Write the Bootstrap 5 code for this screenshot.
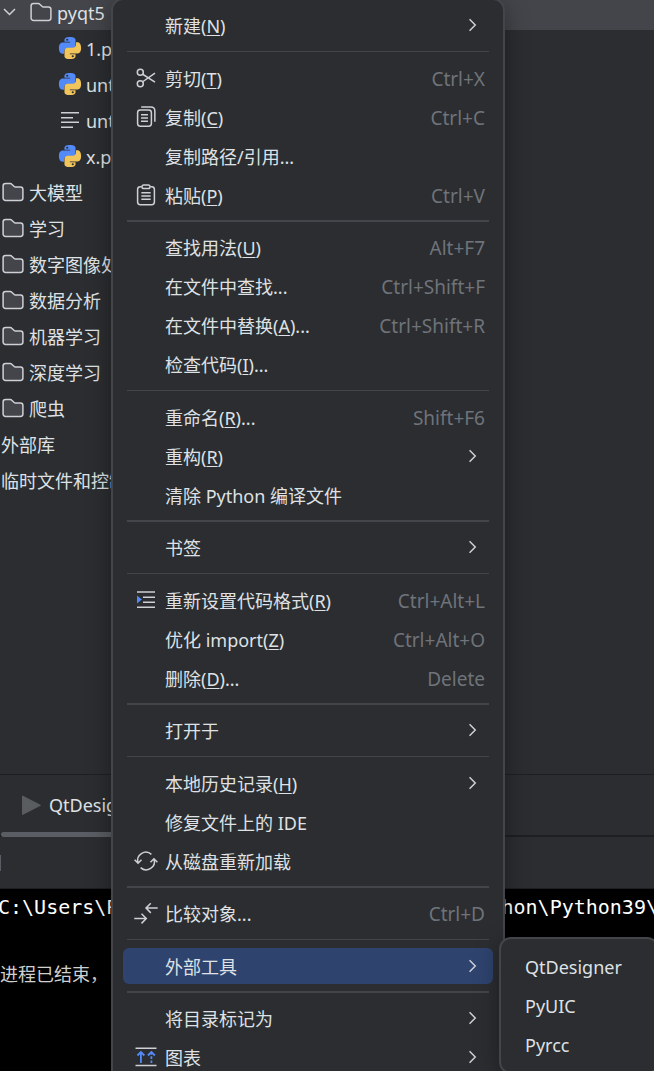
<!DOCTYPE html>
<html lang="zh-CN">
<head>
<meta charset="utf-8">
<meta name="viewport" content="width=device-width, initial-scale=1">
<title>pyqt5</title>
<link href="https://cdn.jsdelivr.net/npm/bootstrap@5.3.0/dist/css/bootstrap.min.css" rel="stylesheet">
<style>
:root { --panel: #2b2d30; --line: #43454a; --ink: #dfe1e5; --dim: #6f737a; --icon: #ced0d6; }
body { background: var(--panel); color: var(--ink); font: 18px/24px "Noto Sans", "Noto Sans CJK SC", sans-serif; }
.icon { width: 24px; height: 24px; flex: none; fill: none; stroke: var(--icon); }
.tree-row { height: 36px; gap: 4px; padding-left: 1px; }
.tree-row > span, .entry > span { padding-top: 2px; }
.tree-row.selected { height: 30px; gap: 4px; padding-left: 0; padding-bottom: 6px; background: var(--line); }
.tree-row.nested { padding-left: 58px; }
.tree-row.selected .toggle { width: 25px; }
.tool-tabs { height: 63px; border-top: 1px solid #1e1f22; border-bottom: 2px solid #1e1f22; }
.tool-tab { padding: 0 16px; gap: 8px; color: var(--ink); margin-left: 1px; }
.tool-tab::after { content: ""; position: absolute; left: 0; right: 0; bottom: -2px; height: 5px; border-radius: 3px; background: #5a5d63; }
.tool-actions { height: 52px; border-bottom: 1px solid #1e1f22; }
.stub { width: 1px; height: 16px; background: #5a5d63; }
.console { height: 182px; background: #000; color: #fff; line-height: 36px; }
.console-path { font-family: "DejaVu Sans Mono", monospace; font-size: 20px; margin: 0 -4px 0 -2px; }
.console-end { font-family: "Noto Sans CJK SC", sans-serif; color: #d0d0d0; margin-top: 30px; }
.popup { background: var(--panel); border: 2px solid var(--line); box-shadow: 0 6px 24px rgba(0, 0, 0, .35); }
.context { left: 111px; top: -2px; width: 394px; padding: 7px 10px; border-radius: 12px; }
.entry { height: 36px; margin-bottom: 3px; padding: 0 8px 0 11px; gap: 7px; border-radius: 6px; color: var(--ink); }
.entry.active { background: #2e436e; }
.keys { color: var(--dim); font-size: 19px; }
.rule { margin: 5px 4px 8px; height: 1px; background: var(--line); }
.rule.thick { margin: 4px 4px 7px; height: 2px; }
.submenu { left: calc(100% + 6px); top: -11px; width: 160px; padding: 9px 10px 7px; border-radius: 12px; }
.submenu .entry { padding-left: 14px; }
u { text-underline-offset: 2px; }
</style>
</head>
<body class="vh-100 overflow-hidden position-relative d-flex flex-column">
<svg class="d-none" viewBox="0 0 16 16">
  <symbol id="folder" viewBox="0 0 16 16"><path fill="#43454a" d="M1.4 12V4c0-1 .7-1.6 1.6-1.6h3.200c.4 0 .7.100 1 .4l1.600 1.500c.200.2.5.3.8.3H13c.9 0 1.600.7 1.600 1.600V12c0 .9-.7 1.600-1.600 1.600H3c-.9 0-1.600-.7-1.600-1.600z"/></symbol>
  <symbol id="next" viewBox="0 0 16 16"><path d="M5.700 4.200 9.500 8l-3.800 3.800"/></symbol>
  <symbol id="python" viewBox="-1 -1 26 26">
    <path stroke="none" fill="#548af7" fill-rule="evenodd" d="M12 0c3.500 0 6 .8 6 3.400v5.400c0 2.100-1.400 3.500-3.500 3.500H9.300c-2.300 0-3.800 1.500-3.800 3.700v2.200H4C1.200 18.200 0 15.500 0 12s1.300-6 4.300-6h7.900v-.9H6V3.400C6 .8 8.500 0 12 0zM9 1.900a1.150 1.150 0 1 0 0 2.300 1.150 1.150 0 0 0 0-2.300z"/>
    <path stroke="none" fill="#f2c55c" fill-rule="evenodd" transform="rotate(180 12 12)" d="M12 0c3.500 0 6 .8 6 3.400v5.400c0 2.100-1.400 3.500-3.500 3.500H9.300c-2.300 0-3.800 1.500-3.800 3.700v2.200H4C1.200 18.200 0 15.500 0 12s1.300-6 4.300-6h7.900v-.9H6V3.400C6 .8 8.500 0 12 0zM9 1.900a1.150 1.150 0 1 0 0 2.300 1.150 1.150 0 0 0 0-2.300z"/>
  </symbol>
</svg>

<main class="flex-grow-1 overflow-hidden">
  <ul class="list-unstyled mb-0 text-nowrap">
    <li class="tree-row selected d-flex align-items-center"><svg class="icon toggle" viewBox="0 0 25 24"><path stroke-width="1.500" d="m4 9 5.500 5.500L15 9"/></svg><svg class="icon"><use href="#folder"/></svg><span>pyqt5</span></li>
    <li class="tree-row nested d-flex align-items-center"><svg class="icon"><use href="#python"/></svg><span>1.py</span></li>
    <li class="tree-row nested d-flex align-items-center"><svg class="icon"><use href="#python"/></svg><span>untitled</span></li>
    <li class="tree-row nested d-flex align-items-center"><svg class="icon" viewBox="0 0 24 24"><path stroke-width="1.500" d="M3 4.800h18M3 9.800h12M3 14.300h18M3 19.200h12"/></svg><span>untitled</span></li>
    <li class="tree-row nested d-flex align-items-center"><svg class="icon"><use href="#python"/></svg><span>x.py</span></li>
    <li class="tree-row d-flex align-items-center"><svg class="icon"><use href="#folder"/></svg><span>大模型</span></li>
    <li class="tree-row d-flex align-items-center"><svg class="icon"><use href="#folder"/></svg><span>学习</span></li>
    <li class="tree-row d-flex align-items-center"><svg class="icon"><use href="#folder"/></svg><span>数字图像处理</span></li>
    <li class="tree-row d-flex align-items-center"><svg class="icon"><use href="#folder"/></svg><span>数据分析</span></li>
    <li class="tree-row d-flex align-items-center"><svg class="icon"><use href="#folder"/></svg><span>机器学习</span></li>
    <li class="tree-row d-flex align-items-center"><svg class="icon"><use href="#folder"/></svg><span>深度学习</span></li>
    <li class="tree-row d-flex align-items-center"><svg class="icon"><use href="#folder"/></svg><span>爬虫</span></li>
    <li class="tree-row d-flex align-items-center"><span>外部库</span></li>
    <li class="tree-row d-flex align-items-center"><span>临时文件和控制台</span></li>
  </ul>
</main>

<section>
  <div class="tool-tabs d-flex">
    <button type="button" class="tool-tab position-relative d-flex align-items-center border-0 bg-transparent"><svg class="icon" viewBox="0 0 24 24"><path fill="#5a5d5f" stroke="#5a5d5f" stroke-linejoin="round" d="M5.500 3v18.500l18-9.200z"/></svg><span>QtDesigner</span></button>
  </div>
  <div class="tool-actions d-flex align-items-center"><span class="stub"></span></div>
  <div class="console overflow-hidden text-nowrap">
    <div class="console-path d-flex justify-content-between"><span>C:\Users\P</span><span>thon\Python39\</span></div>
    <div class="console-end">进程已结束，</div>
  </div>
</section>

<ul class="popup context list-unstyled position-absolute d-flex flex-column mb-0 text-nowrap">
  <li><button type="button" class="entry w-100 border-0 bg-transparent d-flex align-items-center"><span class="icon"></span><span>新建(<u>N</u>)</span><svg class="icon ms-auto"><use href="#next"/></svg></button></li>
  <li class="rule"></li>
  <li><button type="button" class="entry w-100 border-0 bg-transparent d-flex align-items-center"><svg class="icon" viewBox="0 0 16 16"><circle cx="4.200" cy="4.200" r="2"/><circle cx="4.200" cy="11.800" r="2"/><path d="M5.800 5.500 14 10.800M5.800 10.500 14 4.800"/></svg><span>剪切(<u>T</u>)</span><span class="keys ms-auto">Ctrl+X</span></button></li>
  <li><button type="button" class="entry w-100 border-0 bg-transparent d-flex align-items-center"><svg class="icon" viewBox="0 0 16 16"><rect x="2.400" y="3.400" width="9.200" height="10.800" rx="1.800"/><path d="M4.800 1.300h6.400c1.600 0 2.700 1.100 2.700 2.700v7.200M4.700 6.500h4.600M4.700 8.700h4.600M4.700 10.900h4.600"/></svg><span>复制(<u>C</u>)</span><span class="keys ms-auto">Ctrl+C</span></button></li>
  <li><button type="button" class="entry w-100 border-0 bg-transparent d-flex align-items-center"><span class="icon"></span><span>复制路径/引用...</span></button></li>
  <li><button type="button" class="entry w-100 border-0 bg-transparent d-flex align-items-center"><svg class="icon" viewBox="0 0 16 16"><path d="M5 2.500h-.8c-1 0-1.800.8-1.800 1.800v8.400c0 1 .8 1.800 1.800 1.800h7.600c1 0 1.800-.8 1.800-1.800V4.300c0-1-.8-1.800-1.800-1.800H11M4.900 6.500h6.200M4.900 8.700h6.200M4.900 10.900h6.200"/><rect x="5.300" y="1.300" width="5.400" height="2.400" rx="1.200"/></svg><span>粘贴(<u>P</u>)</span><span class="keys ms-auto">Ctrl+V</span></button></li>
  <li class="rule thick"></li>
  <li><button type="button" class="entry w-100 border-0 bg-transparent d-flex align-items-center"><span class="icon"></span><span>查找用法(<u>U</u>)</span><span class="keys ms-auto">Alt+F7</span></button></li>
  <li><button type="button" class="entry w-100 border-0 bg-transparent d-flex align-items-center"><span class="icon"></span><span>在文件中查找...</span><span class="keys ms-auto">Ctrl+Shift+F</span></button></li>
  <li><button type="button" class="entry w-100 border-0 bg-transparent d-flex align-items-center"><span class="icon"></span><span>在文件中替换(<u>A</u>)...</span><span class="keys ms-auto">Ctrl+Shift+R</span></button></li>
  <li><button type="button" class="entry w-100 border-0 bg-transparent d-flex align-items-center"><span class="icon"></span><span>检查代码(<u>I</u>)...</span></button></li>
  <li class="rule"></li>
  <li><button type="button" class="entry w-100 border-0 bg-transparent d-flex align-items-center"><span class="icon"></span><span>重命名(<u>R</u>)...</span><span class="keys ms-auto">Shift+F6</span></button></li>
  <li><button type="button" class="entry w-100 border-0 bg-transparent d-flex align-items-center"><span class="icon"></span><span>重构(<u>R</u>)</span><svg class="icon ms-auto"><use href="#next"/></svg></button></li>
  <li><button type="button" class="entry w-100 border-0 bg-transparent d-flex align-items-center"><span class="icon"></span><span>清除 Python 编译文件</span></button></li>
  <li class="rule thick"></li>
  <li><button type="button" class="entry w-100 border-0 bg-transparent d-flex align-items-center"><span class="icon"></span><span>书签</span><svg class="icon ms-auto"><use href="#next"/></svg></button></li>
  <li class="rule"></li>
  <li><button type="button" class="entry w-100 border-0 bg-transparent d-flex align-items-center"><svg class="icon" viewBox="0 0 16 16"><path d="M2 2.700h12M6 6.200h8M6 9.500h8M2 12.800h12"/><path fill="#548af7" stroke="none" d="M2 5v5.400l3.200-2.700z"/></svg><span>重新设置代码格式(<u>R</u>)</span><span class="keys ms-auto">Ctrl+Alt+L</span></button></li>
  <li><button type="button" class="entry w-100 border-0 bg-transparent d-flex align-items-center"><span class="icon"></span><span>优化 import(<u>Z</u>)</span><span class="keys ms-auto">Ctrl+Alt+O</span></button></li>
  <li><button type="button" class="entry w-100 border-0 bg-transparent d-flex align-items-center"><span class="icon"></span><span>删除(<u>D</u>)...</span><span class="keys ms-auto">Delete</span></button></li>
  <li class="rule thick"></li>
  <li><button type="button" class="entry w-100 border-0 bg-transparent d-flex align-items-center"><span class="icon"></span><span>打开于</span><svg class="icon ms-auto"><use href="#next"/></svg></button></li>
  <li class="rule"></li>
  <li><button type="button" class="entry w-100 border-0 bg-transparent d-flex align-items-center"><span class="icon"></span><span>本地历史记录(<u>H</u>)</span><svg class="icon ms-auto"><use href="#next"/></svg></button></li>
  <li><button type="button" class="entry w-100 border-0 bg-transparent d-flex align-items-center"><span class="icon"></span><span>修复文件上的 IDE</span></button></li>
  <li><button type="button" class="entry w-100 border-0 bg-transparent d-flex align-items-center"><svg class="icon" viewBox="0 0 16 16"><path d="M2.700 9.400A5.500 5.500 0 0 1 11.600 3.600M13.300 6.600A5.500 5.500 0 0 1 4.400 12.400M.4 7.200l2.300 2.300L5 7.200M11 8.800l2.300-2.300 2.300 2.300"/></svg><span>从磁盘重新加载</span></button></li>
  <li class="rule thick"></li>
  <li><button type="button" class="entry w-100 border-0 bg-transparent d-flex align-items-center"><svg class="icon" viewBox="0 0 16 16"><path d="M15.800 4.700H8M11.200 1.500 8 4.700l3.200 3.200M.2 11.700H8M5 8.500l3.200 3.200L5 14.900"/></svg><span>比较对象...</span><span class="keys ms-auto">Ctrl+D</span></button></li>
  <li class="rule"></li>
  <li class="position-relative">
    <button type="button" class="entry active w-100 border-0 d-flex align-items-center"><span class="icon"></span><span>外部工具</span><svg class="icon ms-auto"><use href="#next"/></svg></button>
    <ul class="popup submenu list-unstyled position-absolute d-flex flex-column mb-0">
      <li><button type="button" class="entry w-100 border-0 bg-transparent d-flex align-items-center"><span>QtDesigner</span></button></li>
      <li><button type="button" class="entry w-100 border-0 bg-transparent d-flex align-items-center"><span>PyUIC</span></button></li>
      <li><button type="button" class="entry w-100 border-0 bg-transparent d-flex align-items-center"><span>Pyrcc</span></button></li>
    </ul>
  </li>
  <li class="rule thick"></li>
  <li><button type="button" class="entry w-100 border-0 bg-transparent d-flex align-items-center"><span class="icon"></span><span>将目录标记为</span><svg class="icon ms-auto"><use href="#next"/></svg></button></li>
  <li><button type="button" class="entry w-100 border-0 bg-transparent d-flex align-items-center"><svg class="icon" viewBox="0 0 16 16"><path d="M1 2.200h14M1 13.600h14"/><path stroke="#548af7" stroke-width="1.200" d="M4.600 12V4.700M2.300 7l2.300-2.300L6.900 7M9.300 7l2.300-2.300L13.900 7"/><path stroke="#548af7" stroke-width="1.200" stroke-dasharray="1.800 1" d="M11.600 4.700V12"/></svg><span>图表</span><svg class="icon ms-auto"><use href="#next"/></svg></button></li>
</ul>
<script src="https://cdn.jsdelivr.net/npm/bootstrap@5.3.0/dist/js/bootstrap.bundle.min.js"></script>
</body>
</html>
